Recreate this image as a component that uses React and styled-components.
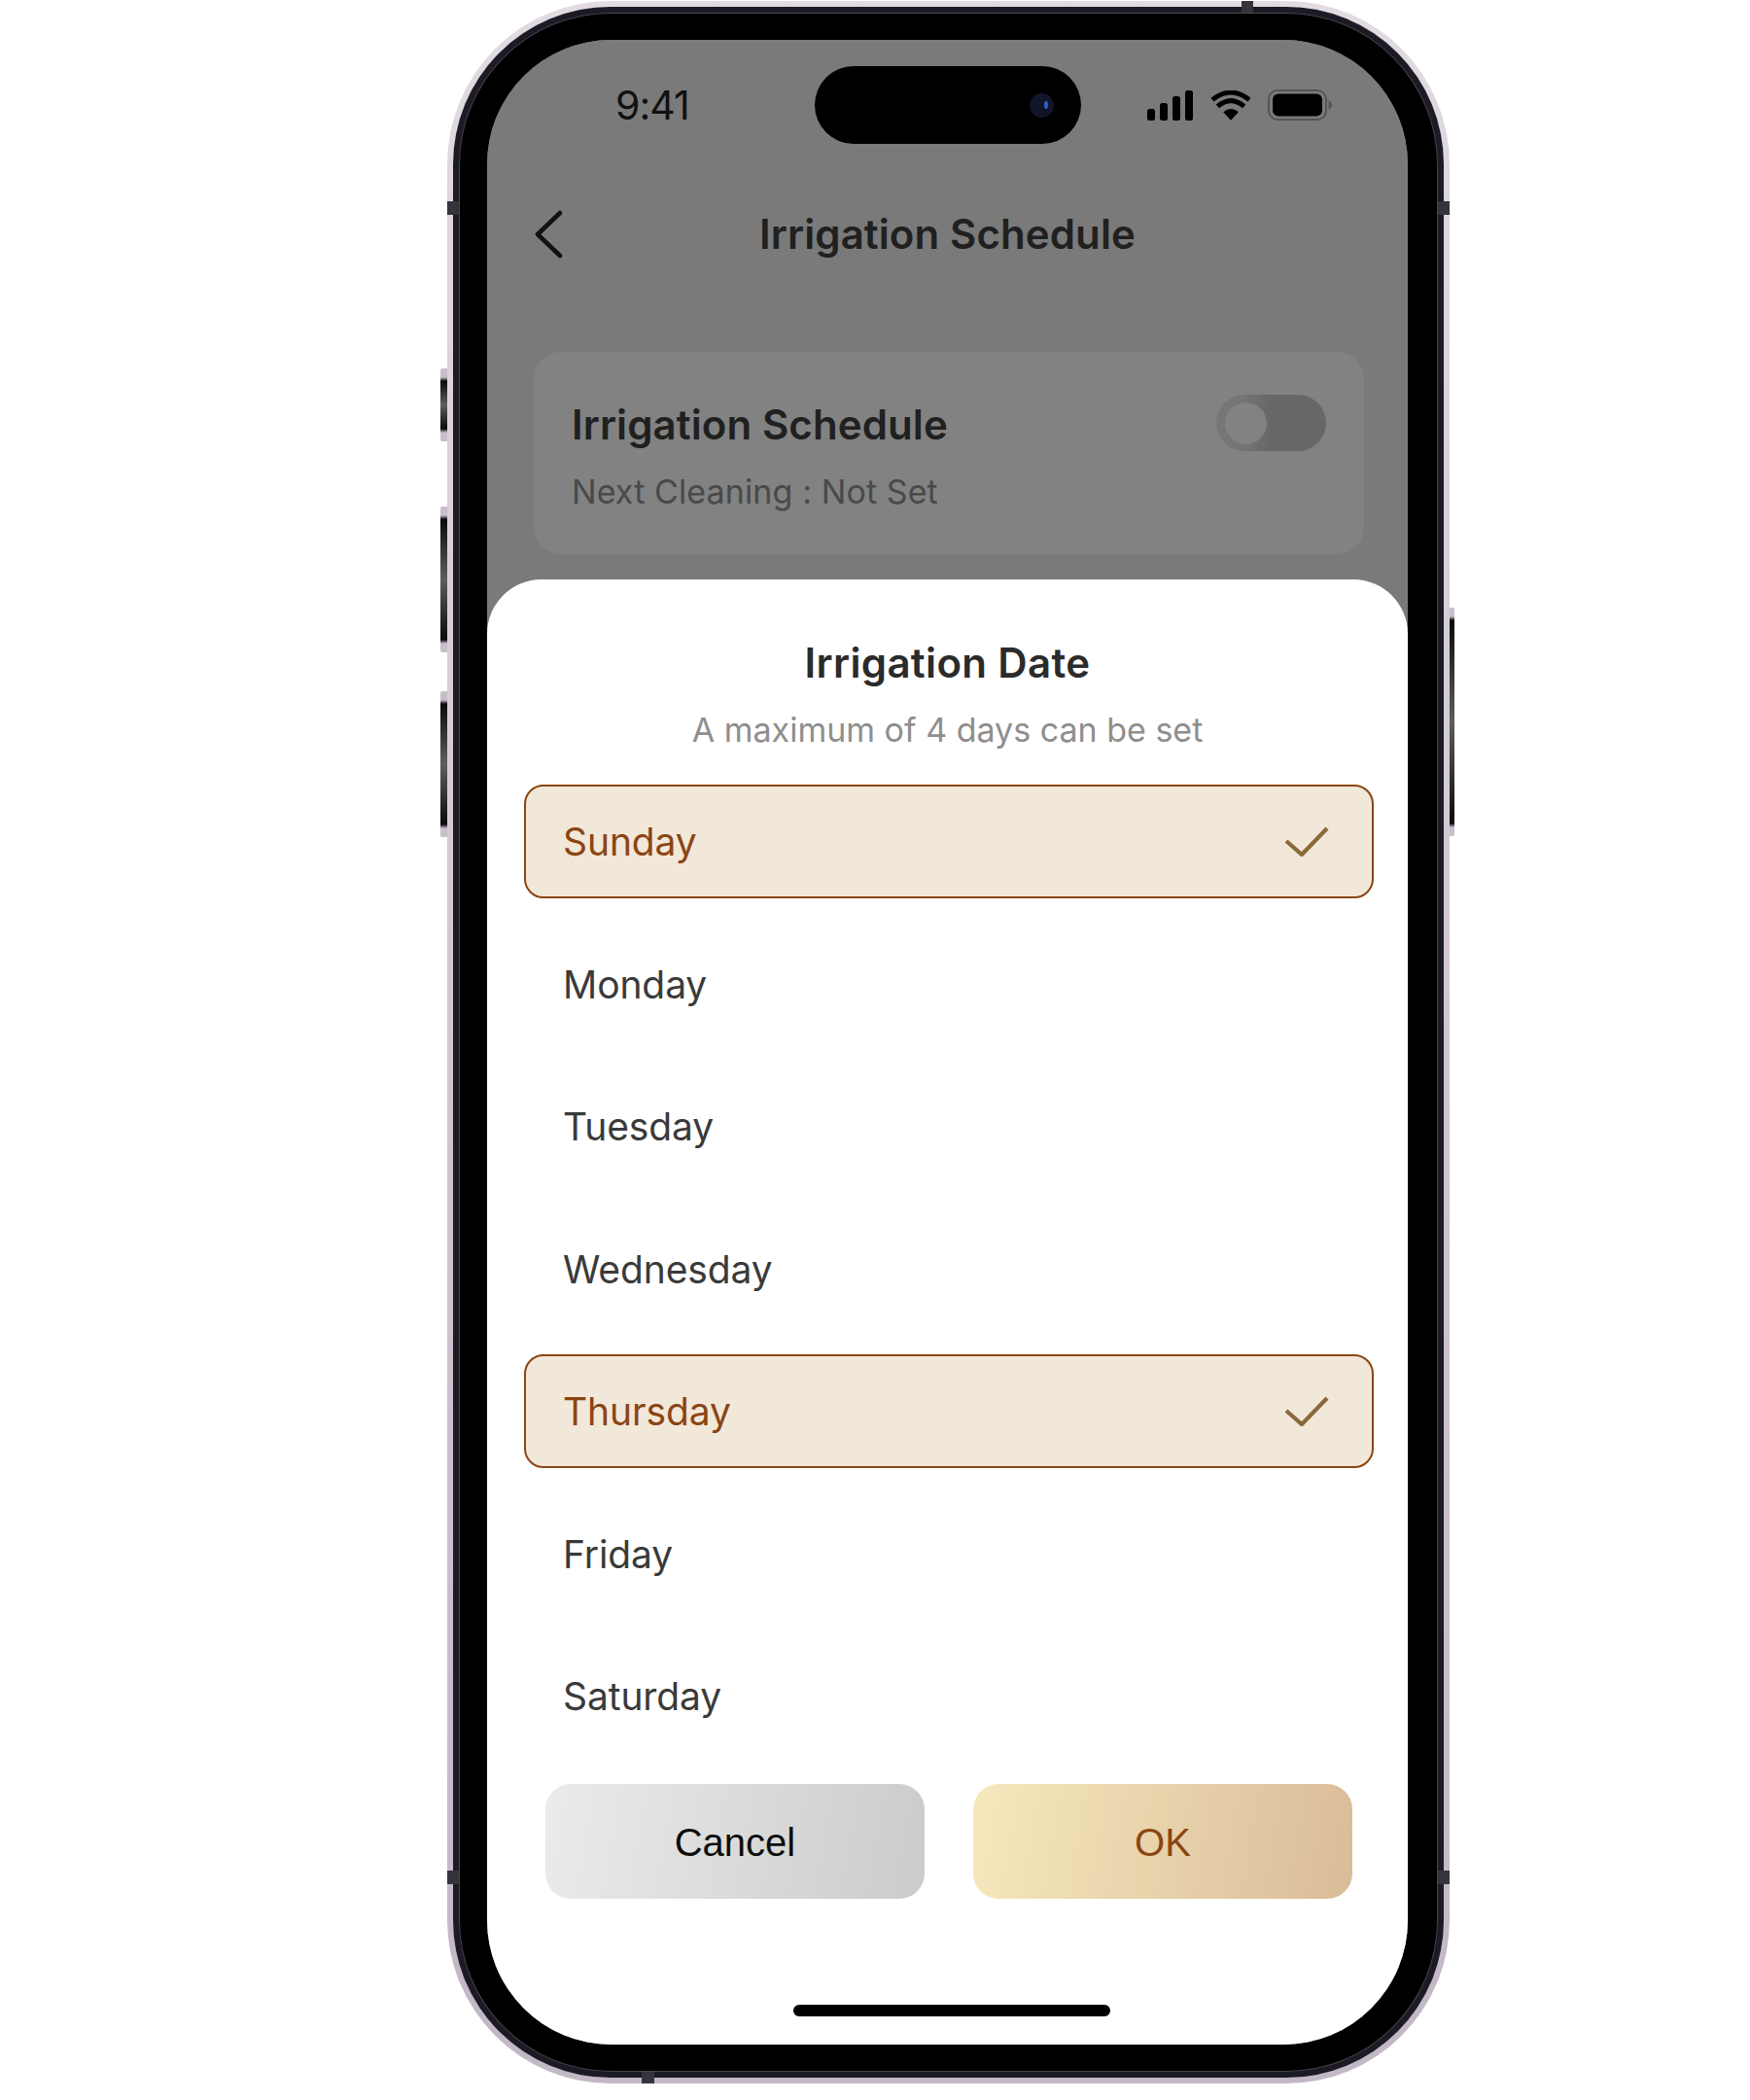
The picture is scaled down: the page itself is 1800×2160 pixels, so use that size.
import React from 'react';
import styled, { createGlobalStyle } from 'styled-components';

const GlobalStyle = createGlobalStyle`
  html, body {
    margin: 0;
    padding: 0;
    background: #fff;
    font-family: Inter, "Liberation Sans", sans-serif;
  }
`;

const Page = styled.div`
  width: 1800px;
  height: 2160px;
  padding: 1px 0 0 460px;
  box-sizing: border-box;
  overflow: hidden;
`;

const Phone = styled.div`
  position: relative;
  width: 1031px;
  height: 2142px;
`;

const Shell = styled.div`
  height: 100%;
  box-sizing: border-box;
  padding: 6px;
  border-radius: 168px;
  background: linear-gradient(180deg, #e2dbe2 0%, #cfc6d0 50%, #c2b8c5 100%);
`;

const Band = styled.div`
  height: 100%;
  box-sizing: border-box;
  padding: 6px;
  border-radius: 162px;
  background: #1c1b25;
`;

const Bezel = styled.div`
  height: 100%;
  box-sizing: border-box;
  padding: 28px 31px 28px 29px;
  border-radius: 156px;
  background: #000;
  box-shadow: inset 0 0 0 1px #4a4550;
`;

const Screen = styled.div`
  position: relative;
  height: 100%;
  border-radius: 128px;
  background: #f0f0f0;
  overflow: hidden;
`;

const SideButton = styled.div`
  position: absolute;
  top: ${p => p.$top}px;
  height: ${p => p.$height}px;
  width: ${p => (p.$right ? 5 : 7)}px;
  ${p => (p.$right ? 'right: -5px;' : 'left: -7px;')}
  border-radius: ${p => (p.$right ? '0 2px 2px 0' : '2px 0 0 2px')};
  background: linear-gradient(
    180deg,
    #c9bfca 0,
    #c9bfca 9px,
    #0a0a0c 13px,
    #5d5d62 50%,
    #0a0a0c calc(100% - 13px),
    #c9bfca calc(100% - 9px),
    #c9bfca 100%
  );
`;

const Antenna = styled.div`
  position: absolute;
  background: #35343c;
  ${p => p.$place}
`;

const StatusBar = styled.div`
  display: flex;
  align-items: center;
  justify-content: space-between;
  height: 78px;
  padding: 28px 78px 0 132px;
`;

const Clock = styled.span`
  font-size: 41px;
  font-weight: 400;
  color: #222;
  letter-spacing: -1px;
`;

const StatusIcons = styled.div`
  display: flex;
  align-items: center;
  gap: 17px;
`;

const Island = styled.div`
  position: absolute;
  top: 27px;
  left: 337px;
  width: 274px;
  height: 80px;
  border-radius: 40px;
  background: #000;
`;

const Camera = styled.div`
  position: absolute;
  top: 28px;
  right: 28px;
  width: 25px;
  height: 25px;
  border-radius: 50%;
  background: #12152a;

  &::after {
    content: '';
    position: absolute;
    top: 8px;
    left: 15px;
    width: 4px;
    height: 8px;
    border-radius: 50%;
    background: #2a62c9;
  }
`;

const NavBar = styled.div`
  position: relative;
  display: flex;
  align-items: center;
  justify-content: center;
  height: 62px;
  margin-top: 62px;
`;

const BackButton = styled.svg`
  position: absolute;
  left: 48px;
  top: 6px;
  width: 34px;
  height: 52px;
`;

const NavTitle = styled.h1`
  margin: 0;
  font-size: 42px;
  font-weight: 600;
  color: #404040;
  letter-spacing: 0.1px;
`;

const Card = styled.section`
  display: flex;
  align-items: flex-start;
  justify-content: space-between;
  box-sizing: border-box;
  height: 208px;
  margin: 91px 45px 0 48px;
  padding: 50px 39px 0 39px;
  border-radius: 28px;
  background: #fff;
`;

const CardTitle = styled.div`
  font-size: 42px;
  line-height: 50px;
  font-weight: 600;
  color: #404040;
  letter-spacing: 0.1px;
`;

const CardNote = styled.div`
  margin-top: 24px;
  font-size: 34px;
  line-height: 40px;
  color: #909090;
  letter-spacing: 0.1px;
`;

const Toggle = styled.div`
  display: flex;
  align-items: center;
  width: 113px;
  height: 58px;
  box-sizing: border-box;
  padding: 0 9px;
  margin-top: -6px;
  border-radius: 29px;
  background: linear-gradient(90deg, #e8e8e8 20%, #cbcbcb 50%);
`;

const Knob = styled.div`
  width: 43px;
  height: 43px;
  border-radius: 50%;
  background: #fff;
`;

const Scrim = styled.div`
  position: absolute;
  inset: 0;
  background: rgba(0, 0, 0, 0.49);
`;

const Sheet = styled.section`
  position: absolute;
  left: 0;
  right: 0;
  bottom: 0;
  height: 1507px;
  display: flex;
  flex-direction: column;
  box-sizing: border-box;
  padding-top: 61px;
  border-radius: 56px 56px 0 0;
  background: #fff;
`;

const SheetTitle = styled.h2`
  margin: 0;
  text-align: center;
  font-size: 42px;
  line-height: 50px;
  font-weight: 600;
  color: #2b2b2b;
  letter-spacing: 0.35px;
`;

const SheetNote = styled.p`
  margin: 24px 0 0;
  text-align: center;
  font-size: 34px;
  line-height: 40px;
  color: #8e8e8e;
`;

const DayList = styled.div`
  display: flex;
  flex-direction: column;
  gap: 29.5px;
  margin: 36px 35px 0 38px;
`;

const DayRow = styled.div`
  display: flex;
  align-items: center;
  justify-content: space-between;
  box-sizing: border-box;
  height: 117px;
  padding: 0 44px 0 38px;
  border: 2px solid ${p => (p.$selected ? '#8b4513' : 'transparent')};
  border-radius: 20px;
  background: ${p => (p.$selected ? '#f2e8da' : 'transparent')};
  color: ${p => (p.$selected ? '#8b4513' : '#3a3a3a')};
  font-size: 39px;
  letter-spacing: -0.1px;
`;

const CheckMark = styled.svg`
  width: 46px;
  height: 31px;
`;

const Actions = styled.div`
  display: flex;
  gap: 50px;
  margin: 32px 57px 0 60px;
`;

const ActionButton = styled.button`
  flex: 1;
  height: 118px;
  padding-top: 3px;
  border: 0;
  border-radius: 26px;
  font-family: "Liberation Sans", Arial, sans-serif;
  font-size: 40px;
  font-weight: 400;
  color: ${p => (p.$primary ? '#8b4513' : '#0d0d0d')};
  background: ${p =>
    p.$primary
      ? 'linear-gradient(100deg, #f6e8bd 0%, #d9bc98 100%)'
      : 'linear-gradient(100deg, #ebebeb 0%, #cbcbcb 100%)'};
`;

const HomeBar = styled.div`
  width: 326px;
  height: 12px;
  margin: 109px 0 0 315px;
  border-radius: 6px;
  background: #000;
`;

const SignalIcon = () => (
  <svg width="48" height="31" viewBox="0 0 48 31">
    <rect x="0" y="19" width="8" height="12" rx="2.5" fill="#000" />
    <rect x="13" y="13" width="8" height="18" rx="2.5" fill="#000" />
    <rect x="26" y="6" width="8" height="25" rx="2.5" fill="#000" />
    <rect x="39" y="0" width="8" height="31" rx="2.5" fill="#000" />
  </svg>
);

const WifiIcon = () => (
  <svg width="42" height="31" viewBox="0 0 43 31">
    <path d="M21.5 31 L13.5 22.5 Q21.5 15.5 29.5 22.5 Z" fill="#000" />
    <path d="M7.5 16.5 Q21.5 4.5 35.5 16.5" fill="none" stroke="#000" strokeWidth="5" />
    <path d="M2 9.5 Q21.5 -6 41 9.5" fill="none" stroke="#000" strokeWidth="5" />
  </svg>
);

const BatteryIcon = () => (
  <svg width="66" height="32" viewBox="0 0 66 32">
    <rect x="1" y="1" width="59" height="30" rx="9" fill="none" stroke="#a8a8a8" strokeWidth="2" />
    <rect x="5" y="4.5" width="51" height="23" rx="6" fill="#000" />
    <path d="M62.5 11.5 Q66 13 66 16 Q66 19 62.5 20.5 Z" fill="#a8a8a8" />
  </svg>
);

const Check = () => (
  <CheckMark viewBox="0 0 46 31">
    <path d="M2 15 L18 29 L44 2" fill="none" stroke="#8a6a3a" strokeWidth="4.2" />
  </CheckMark>
);

const days = [
  { name: 'Sunday', selected: true },
  { name: 'Monday' },
  { name: 'Tuesday' },
  { name: 'Wednesday' },
  { name: 'Thursday', selected: true },
  { name: 'Friday' },
  { name: 'Saturday' }
];

const App = () => (
  <Page>
    <GlobalStyle />
    <Phone>
      <SideButton $top={378} $height={75} />
      <SideButton $top={520} $height={150} />
      <SideButton $top={710} $height={150} />
      <SideButton $right $top={624} $height={235} />
      <Shell>
        <Band>
          <Bezel>
            <Screen>
              <StatusBar>
                <Clock>9:41</Clock>
                <StatusIcons>
                  <SignalIcon />
                  <WifiIcon />
                  <BatteryIcon />
                </StatusIcons>
              </StatusBar>
              <NavBar>
                <BackButton viewBox="0 0 34 52">
                  <path d="M27 4 L4 26 L27 48" fill="none" stroke="#222" strokeWidth="4.6" strokeLinecap="round" strokeLinejoin="round" />
                </BackButton>
                <NavTitle>Irrigation Schedule</NavTitle>
              </NavBar>
              <Card>
                <div>
                  <CardTitle>Irrigation Schedule</CardTitle>
                  <CardNote>Next Cleaning : Not Set</CardNote>
                </div>
                <Toggle><Knob /></Toggle>
              </Card>
              <Scrim />
              <Island><Camera /></Island>
              <Sheet>
                <SheetTitle>Irrigation Date</SheetTitle>
                <SheetNote>A maximum of 4 days can be set</SheetNote>
                <DayList>
                  {days.map(day => (
                    <DayRow key={day.name} $selected={day.selected}>
                      {day.name}
                      {day.selected && <Check />}
                    </DayRow>
                  ))}
                </DayList>
                <Actions>
                  <ActionButton>Cancel</ActionButton>
                  <ActionButton $primary>OK</ActionButton>
                </Actions>
                <HomeBar />
              </Sheet>
            </Screen>
          </Bezel>
        </Band>
      </Shell>
      <Antenna $place="top: 0; left: 817px; width: 12px; height: 12px;" />
      <Antenna $place="top: 206px; left: 0; width: 12px; height: 14px;" />
      <Antenna $place="top: 206px; right: 0; width: 12px; height: 14px;" />
      <Antenna $place="top: 1923px; left: 0; width: 12px; height: 14px;" />
      <Antenna $place="top: 1923px; right: 0; width: 12px; height: 14px;" />
      <Antenna $place="bottom: 0; left: 200px; width: 13px; height: 12px;" />
    </Phone>
  </Page>
);

export default App;
